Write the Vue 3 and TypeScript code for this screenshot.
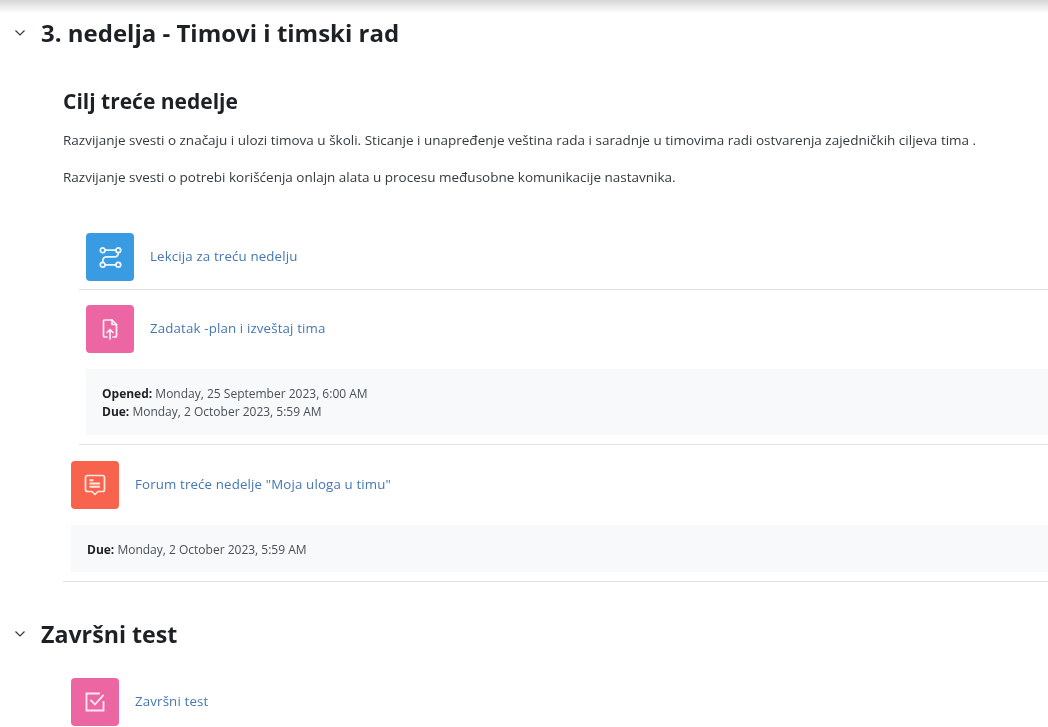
<script setup lang="ts">
interface Info { label: string; value: string }
const infoA: Info[] = [
  { label: 'Opened:', value: 'Monday, 25 September 2023, 6:00 AM' },
  { label: 'Due:', value: 'Monday, 2 October 2023, 5:59 AM' },
]
const infoB: Info[] = [{ label: 'Due:', value: 'Monday, 2 October 2023, 5:59 AM' }]
</script>

<template>
  <div class="page">
    <div class="topfade"></div>

    <section class="week">
      <h3 class="section-title big">
        <svg class="chev" viewBox="0 0 12 8" width="12" height="8"><path d="M1.500 1.500 6 6l4.500-4.500" fill="none" stroke="#343a40" stroke-width="1.2" /></svg>
        <span>3. nedelja - Timovi i timski rad</span>
      </h3>

      <div class="summary">
        <h4 class="goal">Cilj treće nedelje</h4>
        <p class="first">Razvijanje svesti o značaju i ulozi timova u školi. Sticanje i unapređenje veština rada i saradnje u timovima radi ostvarenja zajedničkih ciljeva tima .</p>
        <p class="second">Razvijanje svesti o potrebi korišćenja onlajn alata u procesu međusobne komunikacije nastavnika.</p>
      </div>

      <div class="indented">
        <div class="activity lesson">
          <div class="row">
            <span class="icon blue">
              <svg viewBox="0 0 24 24" width="25" height="25" fill="none" stroke="#fff" stroke-opacity="0.9" stroke-width="1.700" stroke-linecap="round">
                <circle cx="4.500" cy="5" r="2.300" />
                <circle cx="19.500" cy="5" r="2.300" />
                <circle cx="4.500" cy="19" r="2.300" />
                <circle cx="19.500" cy="19" r="2.300" />
                <path d="M7 5h10" />
                <path d="M19.500 7.400c0 2.600-1.500 4.100-4 4.100H8c-2.500 0-3.500 1.600-3.500 5.100" />
                <path d="M7 19h10" />
              </svg>
            </span>
            <a class="link">Lekcija za treću nedelju</a>
          </div>
        </div>

        <div class="activity assign">
          <div class="row">
            <span class="icon pink">
              <svg viewBox="0 0 24 24" width="24" height="24" fill="none" stroke="#fff" stroke-opacity="0.9" stroke-width="1.700" stroke-linejoin="round" stroke-linecap="round">
                <path d="M9 20H6.500a1 1 0 0 1-1-1V4a1 1 0 0 1 1-1h7.500l4.500 4.500V19a1 1 0 0 1-1 1H15" />
                <path d="M14 3v4.500h4.500" />
                <path d="M12 22v-9M9 15.500l3-3 3 3" />
              </svg>
            </span>
            <a class="link">Zadatak -plan i izveštaj tima</a>
          </div>
          <div class="dates tall">
            <div v-for="d in infoA" :key="d.label"><strong>{{ d.label }}</strong> {{ d.value }}</div>
          </div>
        </div>
      </div>

      <div class="activity forum">
        <div class="row">
          <span class="icon coral">
            <svg viewBox="0 0 24 24" width="24" height="24" fill="none" stroke="#fff" stroke-opacity="0.85" stroke-width="1.700" stroke-linejoin="round">
              <path d="M4.500 2.500h15a2 2 0 0 1 2 2v12a2 2 0 0 1-2 2H15l-3 3-3-3H4.500a2 2 0 0 1-2-2v-12a2 2 0 0 1 2-2Z" />
              <path d="M6.500 7.200h4M6.500 10.500h10.500M6.500 13.800h10.500" stroke-width="2" />
            </svg>
          </span>
          <a class="link">Forum treće nedelje "Moja uloga u timu"</a>
        </div>
        <div class="dates short">
          <div v-for="d in infoB" :key="d.label"><strong>{{ d.label }}</strong> {{ d.value }}</div>
        </div>
      </div>
    </section>

    <section class="final">
      <h3 class="section-title small">
        <svg class="chev" viewBox="0 0 12 8" width="12" height="8"><path d="M1.500 1.500 6 6l4.500-4.500" fill="none" stroke="#343a40" stroke-width="1.2" /></svg>
        <span>Završni test</span>
      </h3>
      <div class="final-row">
        <div class="row">
          <span class="icon pink">
            <svg viewBox="0 0 24 24" width="24" height="24" fill="none" stroke="#fff" stroke-opacity="0.85" stroke-width="1.800" stroke-linecap="square" stroke-linejoin="miter">
              <path d="M20.500 12v8.500h-17v-17H16" />
              <path d="m8 10.500 4 4 8-9" />
            </svg>
          </span>
          <a class="link">Završni test</a>
        </div>
      </div>
    </section>
  </div>
</template>

<style>
html, body { margin: 0; background: #fff; overflow: hidden; }
</style>

<style scoped>
.page {
  width: 1048px;
  height: 727px;
  overflow: hidden;
  font-family: "Open Sans", "Noto Sans", sans-serif;
  color: #1d2125;
  background: #fff;
  filter: blur(0.5px);
}
.topfade {
  height: 13px;
  margin-bottom: 1px;
  background: linear-gradient(#d6d6d6, #fff);
}
.week { margin-top: -1px; }
.section-title {
  margin: 0;
  display: flex;
  align-items: center;
  height: 40px;
  font-weight: 700;
  line-height: 40px;
}
.big { font-size: 24px; }
.small { font-size: 23.200px; }
.chev { margin: 0 15px 0 14px; flex: none; }
.week .section-title { margin-bottom: 34px; }
.summary { margin-left: 63px; }
.goal {
  margin: 0 0 16px;
  font-size: 21px;
  line-height: 28px;
  font-weight: 700;
  height: 28px;
}
.summary p {
  margin: 0;
  font-size: 13.500px;
  line-height: 18px;
  color: #343a40;
  white-space: nowrap;
}
.summary .first { margin-bottom: 19px; }
.indented { margin-left: 79px; margin-top: 47px; }
.activity { border-bottom: 1px solid #dee2e6; }
.lesson { padding: 0 0 8px 7px; }
.assign { padding: 15px 0 9px 7px; }
.row { display: flex; align-items: center; gap: 16px; }
.icon {
  width: 48px;
  height: 48px;
  flex: none;
  border-radius: 4px;
  display: flex;
  align-items: center;
  justify-content: center;
}
.blue { background: #399be2; }
.pink { background: #eb66a2; }
.coral { background: #f7634d; }
.link {
  color: #4477b3;
  font-size: 13.300px;
  line-height: 18px;
  letter-spacing: 0.14px;
  margin-top: -2px;
}
.dates {
  margin-top: 16px;
  background: #f8f9fa;
  font-size: 12px;
  line-height: 18px;
  color: #495057;
  white-space: nowrap;
}
.dates strong { color: #1d2125; font-weight: 700; }
.tall { padding: 16px 16px 14px; height: 36px; }
.short { padding: 16px 16px 14px; height: 17px; }
.forum { margin-left: 63px; padding: 16px 0 9px 8px; }
.final { padding-top: 32px; }
.final-row { margin: 24px 0 0 71px; }
</style>
